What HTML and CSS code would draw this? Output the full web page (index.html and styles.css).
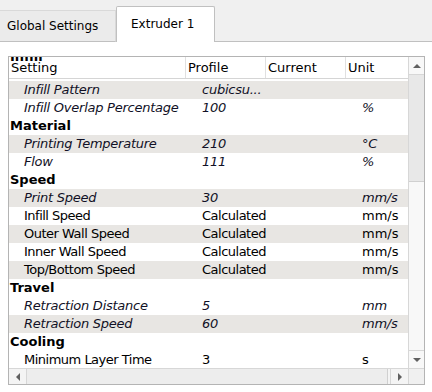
FILE: index.html
```html
<!DOCTYPE html>
<html>
<head>
  <link rel="stylesheet" href="styles.css">
</head>
<body>

<!-- Вкладки -->
<div class="tabs">
  <div class="tab">Global Settings</div>
  <div class="tab active">Extruder 1</div>
  <div class="tab-rest"></div>
</div>

<div class="pane">
  <div class="tree">
    <div class="view">
      <div class="header">
        <div>Setting</div>
        <div>Profile</div>
        <div>Current</div>
        <div>Unit</div>
      </div>
      <div class="bleed">Infill</div>
      <div class="rows">
        <div class="row alt it"><span>Infill Pattern</span><span>cubicsu...</span><span></span><span></span></div>
        <div class="row it"><span>Infill Overlap Percentage</span><span>100</span><span></span><span>%</span></div>
        <div class="row group"><span>Material</span><span></span><span></span><span></span></div>
        <div class="row alt it"><span>Printing Temperature</span><span>210</span><span></span><span>°C</span></div>
        <div class="row it"><span>Flow</span><span>111</span><span></span><span>%</span></div>
        <div class="row group"><span>Speed</span><span></span><span></span><span></span></div>
        <div class="row alt it"><span>Print Speed</span><span>30</span><span></span><span>mm/s</span></div>
        <div class="row"><span>Infill Speed</span><span>Calculated</span><span></span><span>mm/s</span></div>
        <div class="row alt"><span>Outer Wall Speed</span><span>Calculated</span><span></span><span>mm/s</span></div>
        <div class="row"><span>Inner Wall Speed</span><span>Calculated</span><span></span><span>mm/s</span></div>
        <div class="row alt"><span>Top/Bottom Speed</span><span>Calculated</span><span></span><span>mm/s</span></div>
        <div class="row group"><span>Travel</span><span></span><span></span><span></span></div>
        <div class="row it"><span>Retraction Distance</span><span>5</span><span></span><span>mm</span></div>
        <div class="row alt it"><span>Retraction Speed</span><span>60</span><span></span><span>mm/s</span></div>
        <div class="row group"><span>Cooling</span><span></span><span></span><span></span></div>
        <div class="row"><span>Minimum Layer Time</span><span>3</span><span></span><span>s</span></div>
      </div>
    </div>

    <!-- Полосы прокрутки -->
    <div class="vbar">
      <div class="btn"><span class="arrow up"></span></div>
      <div class="vthumb"></div>
      <div class="vtrack"></div>
      <div class="btn down"><span class="arrow dn"></span></div>
    </div>
    <div class="hbar">
      <div class="hbtn"><span class="arrow lt"></span></div>
      <div class="hthumb"></div>
      <div class="hbtn right"><span class="arrow rt"></span></div>
    </div>
    <div class="corner"></div>
  </div>
</div>

</body>
</html>
```

FILE: styles.css
```css
/* Общие */
body {
  margin: 0;
  background: #f0f0f0;
  font-family: "DejaVu Sans", Verdana, sans-serif;
  font-size: 13px;
  color: #000;
}

/* Вкладки */
.tabs {
  display: flex;
  align-items: flex-end;
  height: 42px;
}
.tab {
  box-sizing: border-box;
  height: 32px;
  width: 116px;
  padding-left: 7px;
  line-height: 30px;
  background: #ebebeb;
  border-top: 1px solid #d9d9d9;
  border-right: 1px solid #d9d9d9;
  border-bottom: 1px solid #c0c0c0;
  font-size: 12px;
}
.tab.active {
  height: 36px;
  width: 99px;
  padding-left: 14px;
  line-height: 34px;
  background: #fff;
  border: 1px solid #c0c0c0;
  border-bottom: none;
  border-radius: 2px 2px 0 0;
}
.tab-rest {
  flex: 1;
  border-bottom: 1px solid #c0c0c0;
}

.pane {
  background: #fff;
  height: 350px;
  padding: 14px 0 0 8px;
  box-sizing: border-box;
}

/* Дерево настроек */
.tree {
  width: 417px;
  height: 329px;
  box-sizing: border-box;
  border: 1px solid #b4b4b4;
  display: grid;
  grid-template-columns: 399px 16px;
  grid-template-rows: 311px 16px;
}
.view {
  position: relative;
  overflow: hidden;
}
.header,
.row {
  display: grid;
  grid-template-columns: 177px 80px 80px 62px;
}
.header {
  height: 21px;
  line-height: 21px;
  border-bottom: 1px solid #d5d5d5;
}
.header div {
  padding-left: 2px;
  border-right: 1px solid #e0e0e0;
}
.header div:last-child {
  border-right: none;
}
.bleed {
  position: absolute;
  left: 1px;
  top: 0;
  height: 5px;
  overflow: hidden;
  font-weight: bold;
  line-height: 0;
}
.rows {
  padding-top: 2px;
}
.row {
  height: 18px;
  line-height: 18px;
  white-space: nowrap;
}
.row span {
  padding-left: 16px;
  overflow: hidden;
  letter-spacing: -0.5px;
}
.row span:first-child {
  padding-left: 15px;
}
.row span:last-child {
  letter-spacing: 0;
}
.row.alt {
  background: #e8e6e3;
}
.row.it {
  font-style: italic;
  color: #111126;
}
.row.it span {
  letter-spacing: -0.25px;
}
.row.group span:first-child {
  padding-left: 1px;
  font-weight: bold;
  letter-spacing: 0;
}

/* Полосы прокрутки */
.vbar {
  display: flex;
  flex-direction: column;
  border-left: 1px solid #d7d7d7;
  background: #f8f8f8;
}
.btn {
  height: 17px;
  border-bottom: 1px solid #d7d7d7;
  display: flex;
  align-items: center;
  justify-content: center;
}
.btn.down {
  border-bottom: none;
  border-top: 1px solid #d7d7d7;
}
.vthumb {
  height: 106px;
  background: #e8e8e8;
  border-bottom: 1px solid #d0d0d0;
}
.vtrack {
  flex: 1;
}
.hbar {
  display: flex;
  border-top: 1px solid #d7d7d7;
  background: #f4f4f4;
}
.hbtn {
  width: 17px;
  border-right: 1px solid #d7d7d7;
  display: flex;
  align-items: center;
  justify-content: center;
}
.hbtn.right {
  border-right: none;
  border-left: 1px solid #d7d7d7;
}
.hthumb {
  flex: 1;
  background: #ededed;
  border-right: 1px solid #d0d0d0;
  margin-right: 2px;
}
.corner {
  border-left: 1px solid #d7d7d7;
  border-top: 1px solid #d7d7d7;
  background: #f0f0f0;
}
.arrow {
  width: 0;
  height: 0;
  border: 4px solid transparent;
}
.arrow.up {
  border-bottom: 4px solid #606060;
  border-top: none;
}
.arrow.dn {
  border-top: 4px solid #606060;
  border-bottom: none;
}
.arrow.lt {
  border-right: 4px solid #606060;
  border-left: none;
}
.arrow.rt {
  border-left: 4px solid #606060;
  border-right: none;
}
```
